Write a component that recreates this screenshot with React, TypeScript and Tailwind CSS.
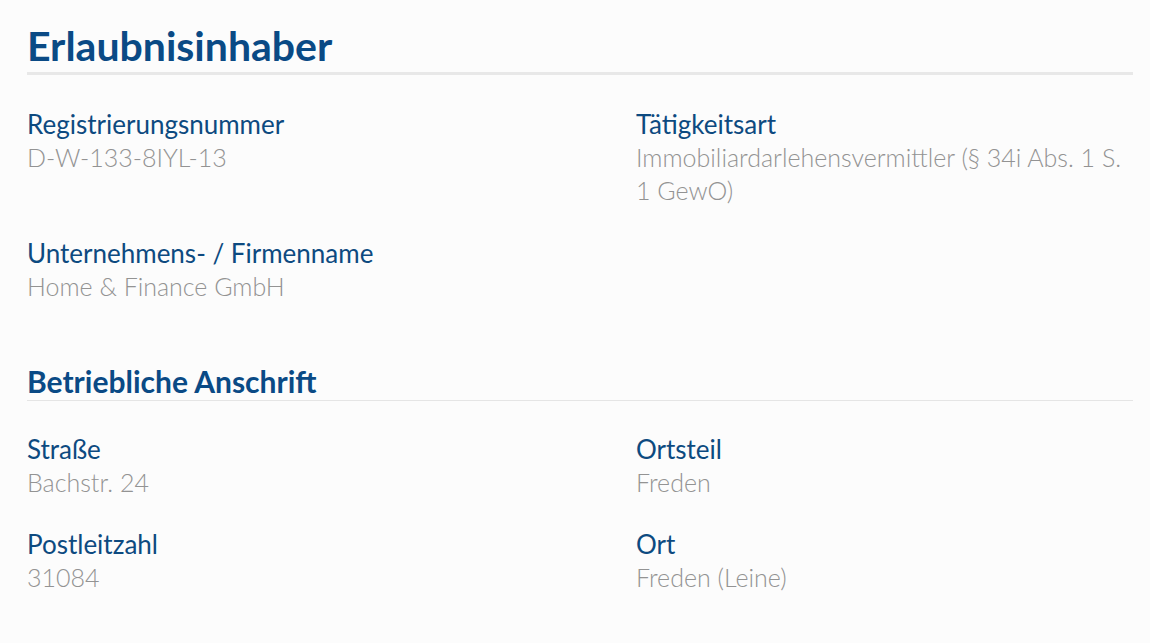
import React from 'react';

type Field = { label: string; value: string };

const holder: Field[][] = [
  [
    { label: 'Registrierungsnummer', value: 'D-W-133-8IYL-13' },
    { label: 'Tätigkeitsart', value: 'Immobiliardarlehensvermittler (§ 34i Abs. 1 S. 1\u00a0GewO)' },
  ],
  [{ label: 'Unternehmens- / Firmenname', value: 'Home & Finance GmbH' }],
];

const address: Field[][] = [
  [
    { label: 'Straße', value: 'Bachstr. 24' },
    { label: 'Ortsteil', value: 'Freden' },
  ],
  [
    { label: 'Postleitzahl', value: '31084' },
    { label: 'Ort', value: 'Freden (Leine)' },
  ],
];

function FieldBlock({ field }: { field: Field }) {
  return (
    <div>
      <div className="text-[26px] leading-[34px] text-[#0d4a80]">{field.label}</div>
      <div className="text-[25px] leading-[33px] font-light text-[#939393]">{field.value}</div>
    </div>
  );
}

function Rows({ rows, gap }: { rows: Field[][]; gap: string }) {
  return (
    <div className={`flex flex-col ${gap}`}>
      {rows.map((row, i) => (
        <div key={i} className="grid grid-cols-[609px_1fr]">
          {row.map((f) => (
            <FieldBlock key={f.label} field={f} />
          ))}
        </div>
      ))}
    </div>
  );
}

export default function App() {
  return (
    <div className="min-h-[643px] bg-[#fcfcfc] px-[27px] pt-[22px] font-['Lato',sans-serif]">
      <div className="w-[1106px]">
        <h1 className="text-[41px] leading-[48px] font-bold text-[#0a4a85] border-b-[3px] border-[#e8e8e8] pb-[2px]">
          Erlaubnisinhaber
        </h1>
        <div className="mt-[32px]">
          <Rows rows={holder} gap="gap-[29px]" />
        </div>
        <h2 className="mt-[61px] text-[30px] leading-[34px] font-bold text-[#0a4a85] border-b border-[#e5e5e5] pb-[2px]">
          Betriebliche Anschrift
        </h2>
        <div className="mt-[31px]">
          <Rows rows={address} gap="gap-[28px]" />
        </div>
      </div>
    </div>
  );
}
